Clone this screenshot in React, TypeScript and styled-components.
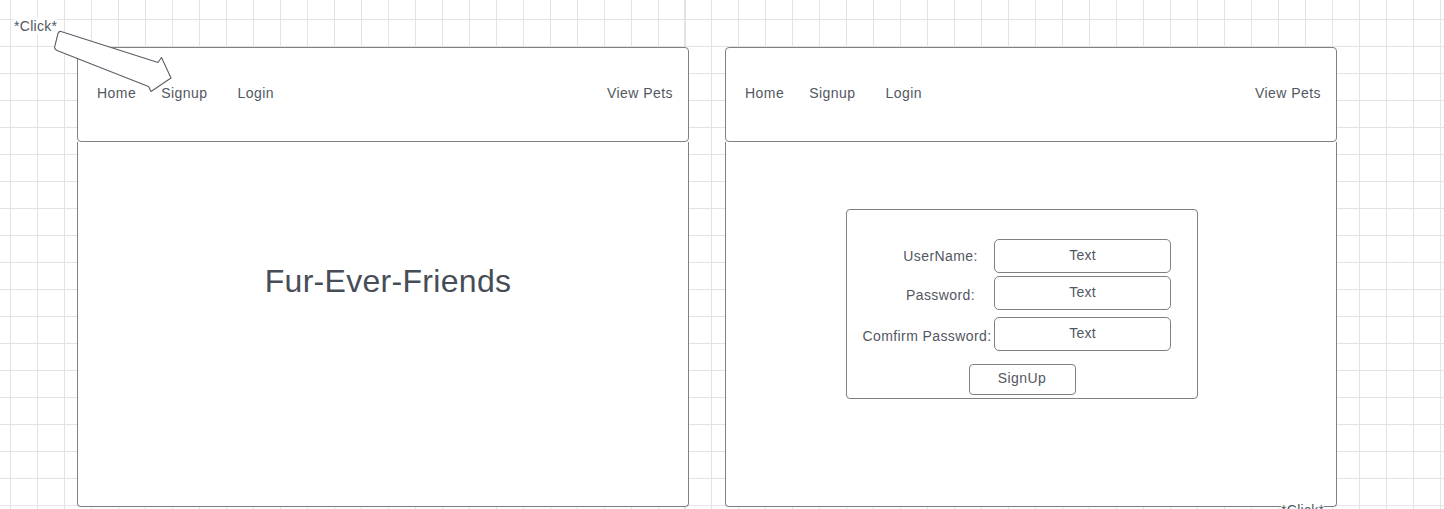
import React from "react";
import styled, { createGlobalStyle } from "styled-components";

const GlobalStyle = createGlobalStyle`
  html, body {
    margin: 0;
    padding: 0;
    width: 1444px;
    height: 509px;
    overflow: hidden;
    background: #ffffff;
  }
  * { box-sizing: border-box; }
`;

const Canvas = styled.div`
  position: relative;
  width: 1444px;
  height: 509px;
  overflow: hidden;
  display: flex;
  align-items: flex-start;
  gap: 36px;
  padding: 47px 0 0 77px;
  font-family: "Liberation Sans", Arial, sans-serif;
  background-color: #ffffff;
  background-image:
    repeating-linear-gradient(to right, transparent 0 10px, #e3e3e3 10px 11px, transparent 11px 26.98px),
    repeating-linear-gradient(to bottom, transparent 0 19px, #e3e3e3 19px 20px, transparent 20px 26.98px);
`;

const Panel = styled.section`
  width: 612px;
  height: 460px;
  display: flex;
  flex-direction: column;
`;

const Nav = styled.nav`
  height: 95px;
  flex: none;
  display: flex;
  align-items: center;
  padding: 0 15px 3px 19px;
  background: #ffffff;
  border: 1px solid #808080;
  border-radius: 4px;
`;

const NavLink = styled.span<{ $gap?: number; $push?: boolean }>`
  font-size: 14px;
  line-height: 16px;
  letter-spacing: 0.45px;
  color: #52575f;
  margin-left: ${(p) => (p.$push ? "auto" : `${p.$gap ?? 0}px`)};
  white-space: nowrap;
`;

const Body = styled.div<{ $padTop: number; $padLeft: number }>`
  flex: 1;
  display: flex;
  flex-direction: column;
  align-items: flex-start;
  padding: ${(p) => p.$padTop}px 0 0 ${(p) => p.$padLeft}px;
  background: #ffffff;
  border: 1px solid #808080;
  border-top: none;
  border-radius: 0 0 4px 4px;
`;

const Title = styled.h1`
  align-self: stretch;
  margin: 0;
  text-align: center;
  font-weight: 400;
  font-size: 32px;
  line-height: 32px;
  letter-spacing: 0.3px;
  color: #474d56;
`;

const FormBox = styled.div`
  width: 352px;
  height: 190px;
  display: flex;
  flex-direction: column;
  padding: 29px 0 3px 0;
  border: 1px solid #808080;
  border-radius: 4px;
  background: #ffffff;
`;

const Row = styled.div<{ $mt: number }>`
  display: flex;
  justify-content: flex-end;
  align-items: center;
  padding-right: 26px;
  margin-top: ${(p) => p.$mt}px;
`;

const Label = styled.span<{ $width: number; $drop?: number }>`
  width: ${(p) => p.$width}px;
  text-align: center;
  font-size: 14px;
  line-height: 16px;
  letter-spacing: 0.4px;
  white-space: nowrap;
  color: #52575f;
  padding-top: ${(p) => p.$drop ?? 0}px;
`;

const Field = styled.div`
  width: 177px;
  height: 34px;
  display: flex;
  align-items: center;
  justify-content: center;
  padding-bottom: 3px;
  border: 1px solid #808080;
  border-radius: 5px;
  font-size: 14px;
  line-height: 16px;
  letter-spacing: 0.2px;
  color: #52575f;
`;

const SubmitButton = styled.div`
  align-self: center;
  width: 107px;
  height: 31px;
  margin-top: 13px;
  display: flex;
  align-items: center;
  justify-content: center;
  padding-bottom: 4px;
  border: 1px solid #808080;
  border-radius: 4px;
  font-size: 14px;
  line-height: 16px;
  letter-spacing: 0.4px;
  color: #52575f;
`;

const Note = styled.span<{ $x: number; $y: number }>`
  position: absolute;
  left: ${(p) => p.$x}px;
  top: ${(p) => p.$y}px;
  font-size: 14px;
  line-height: 16px;
  letter-spacing: 0.3px;
  color: #52575f;
  background: #ffffff;
  white-space: nowrap;
`;

const ArrowSvg = styled.svg`
  position: absolute;
  left: 0;
  top: 0;
  width: 200px;
  height: 110px;
  overflow: visible;
`;

const NavBar: React.FC = () => (
  <Nav>
    <NavLink>Home</NavLink>
    <NavLink $gap={25}>Signup</NavLink>
    <NavLink $gap={30}>Login</NavLink>
    <NavLink $push>View Pets</NavLink>
  </Nav>
);

export default function App() {
  return (
    <>
      <GlobalStyle />
      <Canvas>
        <Panel>
          <NavBar />
          <Body $padTop={123} $padLeft={10}>
            <Title>Fur-Ever-Friends</Title>
          </Body>
        </Panel>
        <Panel>
          <NavBar />
          <Body $padTop={67} $padLeft={120}>
            <FormBox>
              <Row $mt={0}>
                <Label $width={107}>UserName:</Label>
                <Field>Text</Field>
              </Row>
              <Row $mt={3}>
                <Label $width={107} $drop={4}>Password:</Label>
                <Field>Text</Field>
              </Row>
              <Row $mt={7}>
                <Label $width={134} $drop={4}>Comfirm Password:</Label>
                <Field>Text</Field>
              </Row>
              <SubmitButton>SignUp</SubmitButton>
            </FormBox>
          </Body>
        </Panel>
        <Note $x={14} $y={18}>*Click*</Note>
        <Note $x={1281} $y={502}>*Click*</Note>
        <ArrowSvg viewBox="0 0 200 110">
          <path
            d="M61 31.5 L158 62.5 L161.5 57.5 L171 78 L151 91.5 L148.5 86.5 L57 50.5 Q53.5 48.5 55 45.5 L58 33.5 Q59 31 61 31.5 Z"
            fill="#ffffff"
            stroke="#5a5e66"
            strokeWidth={1.1}
            strokeLinejoin="round"
          />
        </ArrowSvg>
      </Canvas>
    </>
  );
}
